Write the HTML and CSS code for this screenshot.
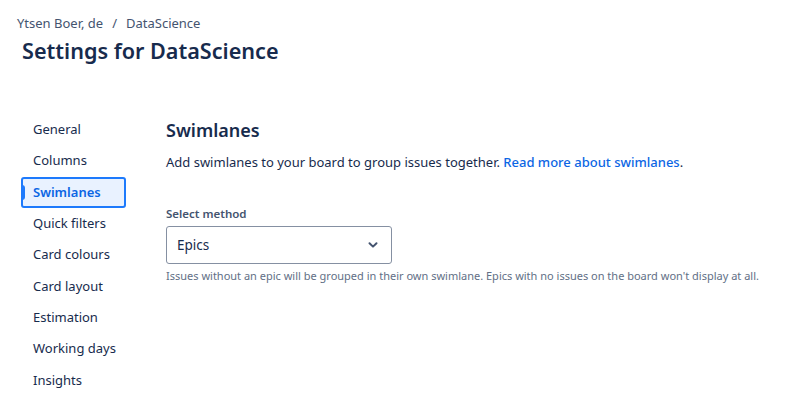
FILE: index.html
```html
<!DOCTYPE html>
<html>
<head>
<meta charset="utf-8">
<link rel="stylesheet" href="styles.css">
</head>
<body>
<div class="page">
  <nav class="crumbs"><span>Ytsen Boer, de</span><span class="sep">/</span><span>DataScience</span></nav>
  <h1 class="title">Settings for DataScience</h1>
  <div class="layout">
    <ul class="side">
      <li class="item">General</li>
      <li class="item">Columns</li>
      <li class="item active">Swimlanes</li>
      <li class="item">Quick filters</li>
      <li class="item">Card colours</li>
      <li class="item">Card layout</li>
      <li class="item">Estimation</li>
      <li class="item">Working days</li>
      <li class="item">Insights</li>
    </ul>
    <main class="content">
      <h2 class="heading">Swimlanes</h2>
      <p class="desc">Add swimlanes to your board to group issues together. <a class="link">Read more about swimlanes</a>.</p>
      <label class="label">Select method</label>
      <div class="select">
        <span>Epics</span>
        <svg class="chev" width="12" height="12" viewBox="0 0 12 12"><path d="M2.5 4.2 L6 7.6 L9.5 4.2" fill="none" stroke="#44546f" stroke-width="2" stroke-linecap="round" stroke-linejoin="round"/></svg>
      </div>
      <p class="help">Issues without an epic will be grouped in their own swimlane. Epics with no issues on the board won't display at all.</p>
    </main>
  </div>
</div>
</body>
</html>
```
FILE: styles.css
```css
* { box-sizing: border-box; }
html, body { margin: 0; padding: 0; background: #fff; }
body { font-family: "Noto Sans", "Open Sans", sans-serif; color: #172b4d; }
.page { padding: 14px 0 0 17px; }
.crumbs { font-size: 13px; color: #44546f; line-height: 18px; display: flex; }
.crumbs .sep { margin: 0 9px 0 9px; }
.title { margin: 3px 0 0 5px; font-size: 21.6px; font-weight: 600; line-height: 32px; color: #172b4d; }
.layout { display: flex; margin-top: 47px; }
.side { list-style: none; margin: 0 0 0 4px; padding: 0; width: 110px; flex: none; }
.item { height: 31.4px; line-height: 31.4px; padding-left: 12px; font-size: 13px; color: #172b4d; position: relative; border-radius: 3px; }
.item.active { border: 2px solid #1d7afc; background: #e9f2ff; color: #0c66e4; font-weight: 600; line-height: 27px; padding-left: 10px; width: 105px; height: 31px; }
.item.active::before { content: ""; position: absolute; left: -2px; top: 6px; width: 4px; height: 15px; background: #1d7afc; border-radius: 0 3px 3px 0; }
.content { margin-left: 35px; }
.heading { margin: 3px 0 0 0; font-size: 18px; font-weight: 600; line-height: 26px; color: #172b4d; }
.desc { margin: 9px 0 0 0; font-size: 13px; line-height: 20px; color: #172b4d; }
.link { color: #0c66e4; font-weight: 500; }
.label { display: block; margin-top: 34px; font-size: 11.5px; font-weight: 600; color: #44546f; line-height: 16px; }
.select { margin-top: 4px; width: 226px; height: 38px; border: 1px solid #8590a2; border-radius: 3px; display: flex; align-items: center; justify-content: space-between; padding: 0 12px 0 10px; font-size: 13.5px; color: #172b4d; }
.chev { display: block; }
.help { margin: 4px 0 0 0; font-size: 11px; line-height: 16px; color: #626f86; }
```
